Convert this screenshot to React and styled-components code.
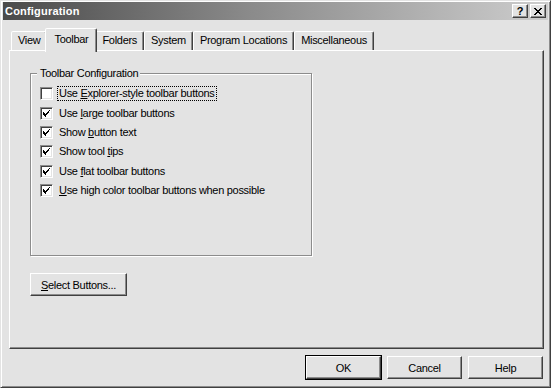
import React from 'react';
import styled, { createGlobalStyle } from 'styled-components';

const GlobalStyle = createGlobalStyle`
  html, body {
    margin: 0;
    padding: 0;
    background: #e3e3e3;
  }
  body {
    font-family: "Liberation Sans", Arial, sans-serif;
    font-size: 11px;
    letter-spacing: -0.3px;
    color: #000;
  }
`;

const tabs = ['View', 'Toolbar', 'Folders', 'System', 'Program Locations', 'Miscellaneous'];

const options = [
  { pre: 'Use ', key: 'E', post: 'xplorer-style toolbar buttons', checked: false, focused: true },
  { pre: 'Use ', key: 'l', post: 'arge toolbar buttons', checked: true },
  { pre: 'Show ', key: 'b', post: 'utton text', checked: true },
  { pre: 'Show tool ', key: 't', post: 'ips', checked: true },
  { pre: 'Use ', key: 'f', post: 'lat toolbar buttons', checked: true },
  { pre: '', key: 'U', post: 'se high color toolbar buttons when possible', checked: true },
];

const CheckMark = () => (
  <svg width="7" height="7" viewBox="0 0 7 7" shapeRendering="crispEdges">
    <path d="M6 0h1v1h-1zM5 1h1v2h-1zM4 2h1v2h-1zM3 3h1v2h-1zM2 4h1v3h-1zM1 3h1v3h-1zM0 2h1v3h-1z" fill="#000" />
  </svg>
);

const CloseGlyph = () => (
  <svg width="8" height="7" viewBox="0 0 8 7" shapeRendering="crispEdges">
    <path d="M0 0h2v1h-2zM6 0h2v1h-2zM1 1h2v1h-2zM5 1h2v1h-2zM2 2h4v1h-4zM3 3h2v1h-2zM2 4h4v1h-4zM1 5h2v1h-2zM5 5h2v1h-2zM0 6h2v1h-2zM6 6h2v1h-2z" fill="#000" />
  </svg>
);

const App = () => {
  return (
    <>
      <GlobalStyle />
      <Window>
        <TitleBar>
          <Title>Configuration</Title>
          <TitleButtons>
            <TitleButton>?</TitleButton>
            <TitleButton>
              <CloseGlyph />
            </TitleButton>
          </TitleButtons>
        </TitleBar>

        <Body>
          <TabRow>
            {tabs.map((t) => (
              <Tab key={t} $active={t === 'Toolbar'}>
                {t}
              </Tab>
            ))}
          </TabRow>

          <Panel>
            <GroupBox>
              <Legend>Toolbar Configuration</Legend>
              <OptionList>
                {options.map((o) => (
                  <OptionRow key={o.post}>
                    <CheckBox>{o.checked && <CheckMark />}</CheckBox>
                    <OptionLabel $focused={o.focused}>
                      {o.pre}
                      <u>{o.key}</u>
                      {o.post}
                    </OptionLabel>
                  </OptionRow>
                ))}
              </OptionList>
            </GroupBox>

            <SelectButton>
              <u>S</u>elect Buttons...
            </SelectButton>
          </Panel>

          <Footer>
            <Button $default>OK</Button>
            <Button>Cancel</Button>
            <Button>Help</Button>
          </Footer>
        </Body>
      </Window>
    </>
  );
};

export default App;

const Window = styled.div`
  box-sizing: border-box;
  width: 551px;
  height: 388px;
  display: flex;
  flex-direction: column;
  padding: 1px 2px 0 2px;
  border: 1px solid;
  border-color: #e3e3e3 #404040 #404040 #e3e3e3;
  box-shadow: inset 1px 1px #fff, inset -1px -1px #8c8c8c;
  background: #e3e3e3;
`;

const TitleBar = styled.div`
  height: 18px;
  display: flex;
  align-items: center;
  justify-content: space-between;
  padding: 0 2px 0 2px;
  background: linear-gradient(90deg, #4a4a4a 0%, #8a8a8a 45%, #cdcdcd 100%);
`;

const Title = styled.div`
  color: #fff;
  font-weight: 700;
  font-size: 11px;
  letter-spacing: 0.2px;
`;

const TitleButtons = styled.div`
  display: flex;
  gap: 2px;
`;

const TitleButton = styled.div`
  box-sizing: border-box;
  width: 16px;
  height: 14px;
  display: flex;
  align-items: center;
  justify-content: center;
  background: #e3e3e3;
  border: 1px solid;
  border-color: #fff #404040 #404040 #fff;
  box-shadow: inset -1px -1px #8c8c8c;
  font-weight: 700;
  font-size: 11px;
  letter-spacing: 0;
  line-height: 1;
`;

const Body = styled.div`
  flex: 1;
  display: flex;
  flex-direction: column;
  padding: 8px 4px 8px 6px;
`;

const TabRow = styled.div`
  height: 22px;
  display: flex;
  align-items: flex-end;
  padding-left: 2px;
`;

const Tab = styled.div`
  box-sizing: border-box;
  height: ${(p) => (p.$active ? '24px' : '19px')};
  margin: ${(p) => (p.$active ? '0 -2px -2px -2px' : '0')};
  padding: ${(p) => (p.$active ? '4px 8px 0 8px' : '2px 6px 0 6px')};
  position: relative;
  z-index: ${(p) => (p.$active ? 2 : 0)};
  background: #e3e3e3;
  border: 1px solid;
  border-bottom: none;
  border-color: #fff #404040 transparent #fff;
  border-radius: 2px 2px 0 0;
  box-shadow: inset -1px 0 #8c8c8c;
  white-space: nowrap;
`;

const Panel = styled.div`
  flex: 1;
  box-sizing: border-box;
  position: relative;
  z-index: 1;
  display: flex;
  flex-direction: column;
  align-items: flex-start;
  padding: 16px 20px 0 20px;
  border: 1px solid;
  border-color: #fff #404040 #404040 #fff;
  box-shadow: inset -1px -1px #8c8c8c;
`;

const GroupBox = styled.fieldset`
  box-sizing: border-box;
  width: 282px;
  height: 189px;
  margin: 0;
  padding: 4px 0 0 9px;
  border: 1px solid #8c8c8c;
  box-shadow: inset 1px 1px #fff, 1px 1px #fff;
`;

const Legend = styled.legend`
  padding: 0 2px 0 3px;
  margin-left: -3px;
  background: #e3e3e3;
  line-height: 13px;
`;

const OptionList = styled.div`
  display: grid;
  grid-auto-rows: 19.4px;
  align-items: center;
`;

const OptionRow = styled.div`
  display: flex;
  align-items: center;
  gap: 5px;
`;

const CheckBox = styled.div`
  box-sizing: border-box;
  width: 13px;
  height: 13px;
  display: flex;
  align-items: center;
  justify-content: center;
  background: #fff;
  border: 1px solid;
  border-color: #8c8c8c #fff #fff #8c8c8c;
  box-shadow: inset 1px 1px #404040, inset -1px -1px #e3e3e3;
`;

const OptionLabel = styled.span`
  padding: 0 1px;
  line-height: 13px;
  outline: ${(p) => (p.$focused ? '1px dotted #000' : 'none')};
  white-space: nowrap;
`;

const Button = styled.div`
  box-sizing: border-box;
  width: 75px;
  height: 23px;
  display: flex;
  align-items: center;
  justify-content: center;
  background: #e3e3e3;
  border: 1px solid;
  border-color: #fff #404040 #404040 #fff;
  box-shadow: ${(p) =>
    p.$default
      ? '0 0 0 1px #000, inset -1px -1px #8c8c8c'
      : 'inset -1px -1px #8c8c8c'};
`;

const SelectButton = styled(Button)`
  width: 97px;
  margin-top: 17px;
`;

const Footer = styled.div`
  display: flex;
  justify-content: flex-end;
  gap: 6px;
  padding-top: 7px;
  padding-right: 1px;
`;
